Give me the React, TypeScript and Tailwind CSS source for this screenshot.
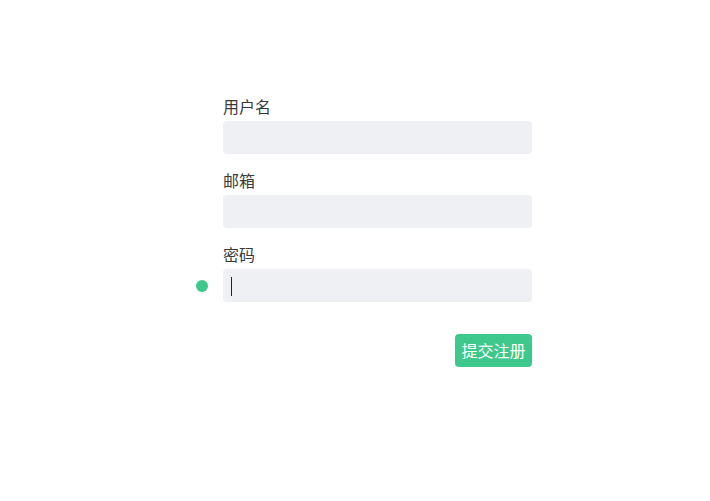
import React from "react";

const font = { fontFamily: '"Noto Sans CJK SC", "Noto Sans", sans-serif' };

function Field({ label, active }: { label: string; active?: boolean }) {
  return (
    <div className="relative mb-[16px]">
      <div className="h-[20px] text-[16px] leading-[20px] text-[#3a3a3a]">{label}</div>
      <div className="relative mt-[5px] h-[33px] w-[309px] rounded-[4px] bg-[#eff0f4]">
        {active && (
          <>
            <span className="absolute left-[-27px] top-[11px] h-[12px] w-[12px] rounded-full bg-[#3ec88b]" />
            <span className="absolute left-[8px] top-[8px] h-[19px] w-[1px] bg-[#222]" />
          </>
        )}
      </div>
    </div>
  );
}

export default function App() {
  return (
    <div className="min-h-[501px] w-full bg-white" style={font}>
      <div className="ml-[223px] w-[309px] pt-[96px]">
        <Field label="用户名" />
        <Field label="邮箱" />
        <Field label="密码" active />
        <div className="mt-[32px] flex justify-end">
          <button className="h-[33px] w-[77px] rounded-[4px] bg-[#3ec88b] text-[16px] leading-[33px] text-white">
            提交注册
          </button>
        </div>
      </div>
    </div>
  );
}
